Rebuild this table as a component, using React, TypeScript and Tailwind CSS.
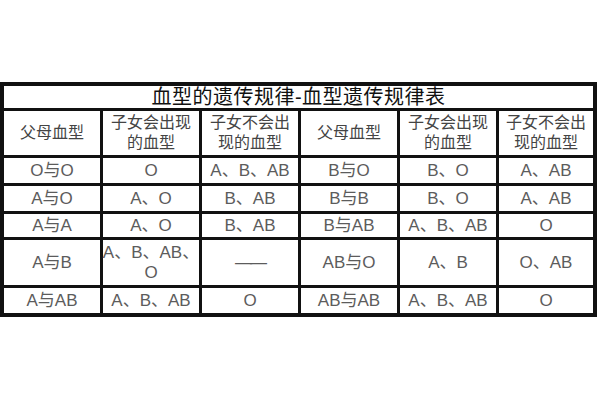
import React from "react";

const font = { fontFamily: '"Liberation Sans", "Noto Sans CJK SC", sans-serif' };

function Cell({ children, className = "" }: { children: React.ReactNode; className?: string }) {
  return (
    <div className={`bg-white flex items-center justify-center text-center leading-[20px] ${className}`}>
      {children}
    </div>
  );
}

export default function App() {
  const headers = [
    "父母血型",
    <>子女会出现<br />的血型</>,
    <>子女不会出<br />现的血型</>,
    "父母血型",
    <>子女会出现<br />的血型</>,
    <>子女不会出<br />现的血型</>,
  ];
  const rows: React.ReactNode[][] = [
    ["O与O", "O", "A、B、AB", "B与O", "B、O", "A、AB"],
    ["A与O", "A、O", "B、AB", "B与B", "B、O", "A、AB"],
    ["A与A", "A、O", "B、AB", "B与AB", "A、B、AB", "O"],
    ["A与B", <span className="whitespace-nowrap">A、B、AB、<br />O</span>, <span className="tracking-[-2px]">——</span>, "AB与O", "A、B", "O、AB"],
    ["A与AB", "A、B、AB", "O", "AB与AB", "A、B、AB", "O"],
  ];
  return (
    <div className="w-[600px] h-[400px] bg-white overflow-hidden" style={font}>
      <div className="mt-[82px] w-[597px] bg-[#111] pt-[4px] pb-[4px] pl-[4px] pr-[4px] grid grid-cols-[96px_96px_96px_96px_96px_94px] grid-rows-[22px_44px_25px_25px_23px_45px_25px] gap-[3px]">
        <div className="col-span-6 bg-white flex items-center justify-center text-[20px] leading-[22px] text-[#111] tracking-[0.5px]">
          血型的遗传规律-血型遗传规律表
        </div>
        {headers.map((h, i) => (
          <Cell key={`h${i}`} className="text-[16px] text-[#444]">{h}</Cell>
        ))}
        {rows.map((r, ri) =>
          r.map((c, ci) => (
            <Cell key={`r${ri}c${ci}`} className="text-[17px] text-[#5c5c5c]">{c}</Cell>
          ))
        )}
      </div>
    </div>
  );
}
